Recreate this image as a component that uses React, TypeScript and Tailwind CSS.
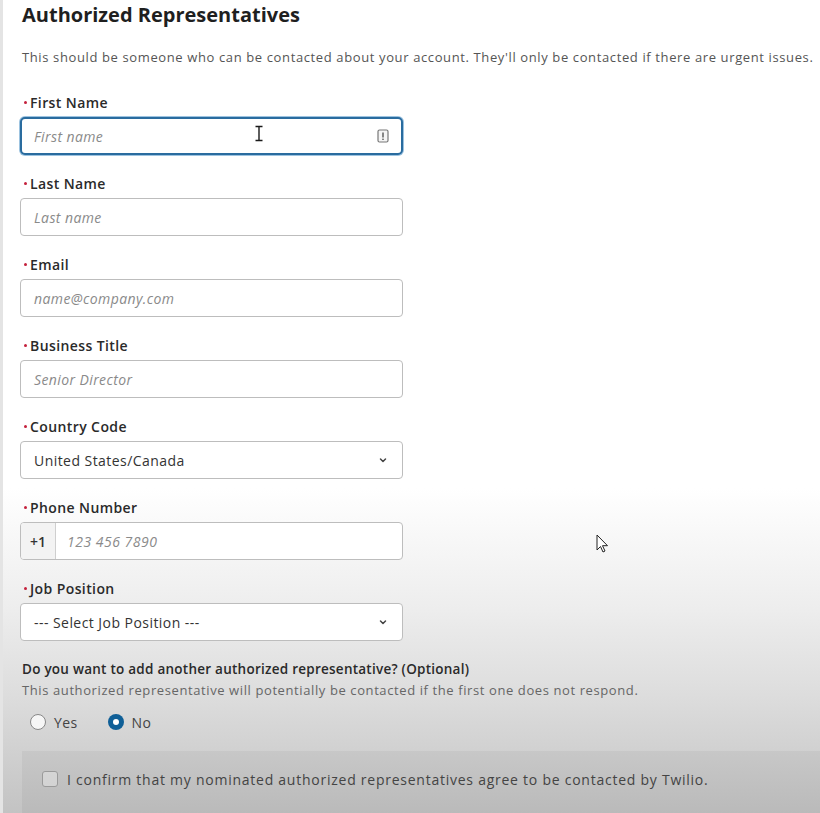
import React from "react";

const font = "font-['Open_Sans','Lato','Liberation_Sans',sans-serif]";

function Label({ children }: { children: React.ReactNode }) {
  return (
    <div className="flex items-center h-5 text-[14px] font-semibold text-[#2a2a2a] tracking-[0.4px]">
      <span className="w-[3px] h-[3px] rounded-full bg-[#c4203c] ml-[4px] mr-[3px]" />
      {children}
    </div>
  );
}

function Chevron() {
  return (
    <svg width="10" height="10" viewBox="0 0 10 10" className="text-[#444]">
      <path d="M2.5 4l2.5 2.5L7.5 4" fill="none" stroke="currentColor" strokeWidth="1.5" strokeLinecap="round" strokeLinejoin="round" />
    </svg>
  );
}

function TextField({ label, placeholder }: { label: string; placeholder: string }) {
  return (
    <div className="mb-[18px]">
      <Label>{label}</Label>
      <div className="mt-[5px] h-[38px] w-[383px] rounded-[4px] border border-[#bdbdbd] bg-white flex items-center pl-[13px]">
        <span className="text-[14px] italic text-[#8a8a8a] tracking-[0.4px]">{placeholder}</span>
      </div>
    </div>
  );
}

function SelectField({ label, value }: { label: string; value: string }) {
  return (
    <div className="mb-[18px]">
      <Label>{label}</Label>
      <div className="mt-[5px] h-[38px] w-[383px] rounded-[4px] border border-[#bdbdbd] bg-white flex items-center justify-between pl-[13px] pr-[14px]">
        <span className="text-[14px] text-[#333] tracking-[0.45px]">{value}</span>
        <Chevron />
      </div>
    </div>
  );
}

export default function App() {
  return (
    <div
      className={`${font} relative w-[820px] h-[813px] overflow-hidden border-l-[3px] border-[#e4e4e4] bg-[linear-gradient(to_bottom,#ffffff_0%,#ffffff_60%,#ededed_75%,#dcdcdc_86%,#c3c3c3_100%)]`}
    >
      <div className="pl-[17px] pt-[1px]">
        <h1 className="ml-[2px] text-[20px] leading-[28px] font-bold text-[#1f1f1f]">Authorized Representatives</h1>
        <p className="ml-[2px] mt-[18px] text-[13px] leading-5 text-[#555] tracking-[0.62px] whitespace-nowrap">
          This should be someone who can be contacted about your account. They'll only be contacted if there are urgent issues.
        </p>

        <div className="mt-[25px]">
          {/* focused first name */}
          <div className="mb-[18px]">
            <Label>First Name</Label>
            <div className="mt-[5px] h-[38px] w-[383px] rounded-[5px] border-2 border-[#2a6c9f] shadow-[0_0_0_1px_#9cc3e0] bg-white flex items-center pl-[12px] pr-[12px] justify-between">
              <span className="text-[14px] italic text-[#8a8a8a] tracking-[0.4px]">First name</span>
              <svg width="12" height="14" viewBox="0 0 12 14">
                <rect x="1" y="1" width="10" height="12" rx="1.5" fill="#f4f4f4" stroke="#777" strokeWidth="1.2" />
                <rect x="5.3" y="3.5" width="1.4" height="5" fill="#555" />
                <rect x="5.3" y="9.6" width="1.4" height="1.4" fill="#555" />
              </svg>
            </div>
          </div>
          <TextField label="Last Name" placeholder="Last name" />
          <TextField label="Email" placeholder="name@company.com" />
          <TextField label="Business Title" placeholder="Senior Director" />
          <SelectField label="Country Code" value="United States/Canada" />
          <div className="mb-[18px]">
            <Label>Phone Number</Label>
            <div className="mt-[5px] h-[38px] w-[383px] rounded-[4px] border border-[#bdbdbd] bg-white flex items-stretch overflow-hidden">
              <div className="w-[35px] bg-[#f3f3f3] border-r border-[#cfcfcf] flex items-center justify-center text-[14px] text-[#333] font-semibold">+1</div>
              <div className="flex items-center pl-[11px] text-[14px] italic text-[#8a8a8a] tracking-[0.5px]">123 456 7890</div>
            </div>
          </div>
          <SelectField label="Job Position" value="--- Select Job Position ---" />
        </div>

        <div className="mt-[1px] ml-[2px]">
          <div className="text-[13.5px] leading-5 font-semibold text-[#2a2a2a] tracking-[0.25px]">
            Do you want to add another authorized representative? (Optional)
          </div>
          <div className="mt-[2px] text-[13px] leading-[18px] text-[#666] tracking-[0.6px]">
            This authorized representative will potentially be contacted if the first one does not respond.
          </div>
          <div className="mt-[13px] flex items-center h-5 pl-[8px] text-[14px] text-[#444] tracking-[0.4px]">
            <span className="w-[16px] h-[16px] rounded-full border border-[#888] bg-[#f6f6f6]" />
            <span className="ml-[8px]">Yes</span>
            <span className="ml-[30px] w-[16px] h-[16px] rounded-full bg-[#0f5f97] flex items-center justify-center">
              <span className="w-[6px] h-[6px] rounded-full bg-white" />
            </span>
            <span className="ml-[8px]">No</span>
          </div>
        </div>
      </div>

      <div className="ml-[19px] mt-[19px] h-[120px] bg-black/[0.045] pt-[18px] pl-[20px]">
        <div className="flex items-center h-5">
          <span className="w-[16px] h-[16px] rounded-[3px] border border-[#9a9a9a] bg-[#f0f0f0]/40" />
          <span className="ml-[9px] text-[14px] text-[#444] tracking-[0.75px] whitespace-nowrap">
            I confirm that my nominated authorized representatives agree to be contacted by Twilio.
          </span>
        </div>
      </div>

      {/* text cursor */}
      <svg className="absolute left-[251px] top-[125px]" width="10" height="17" viewBox="0 0 10 17">
        <path d="M1.5 1.5h2.5M6 1.5h2.5M5 2v13M1.5 15.5h2.5M6 15.5h2.5M3.5 1.5h3M3.5 15.5h3" stroke="#1a1a1a" strokeWidth="1.4" fill="none" />
      </svg>
      {/* mouse pointer */}
      <svg className="absolute left-[593px] top-[534px]" width="14" height="20" viewBox="0 0 14 20">
        <path d="M1 1v15l3.5-3.5 2.5 5.5 2-1-2.5-5.3H11.5z" fill="#fff" stroke="#222" strokeWidth="1" strokeLinejoin="round" />
      </svg>
    </div>
  );
}
